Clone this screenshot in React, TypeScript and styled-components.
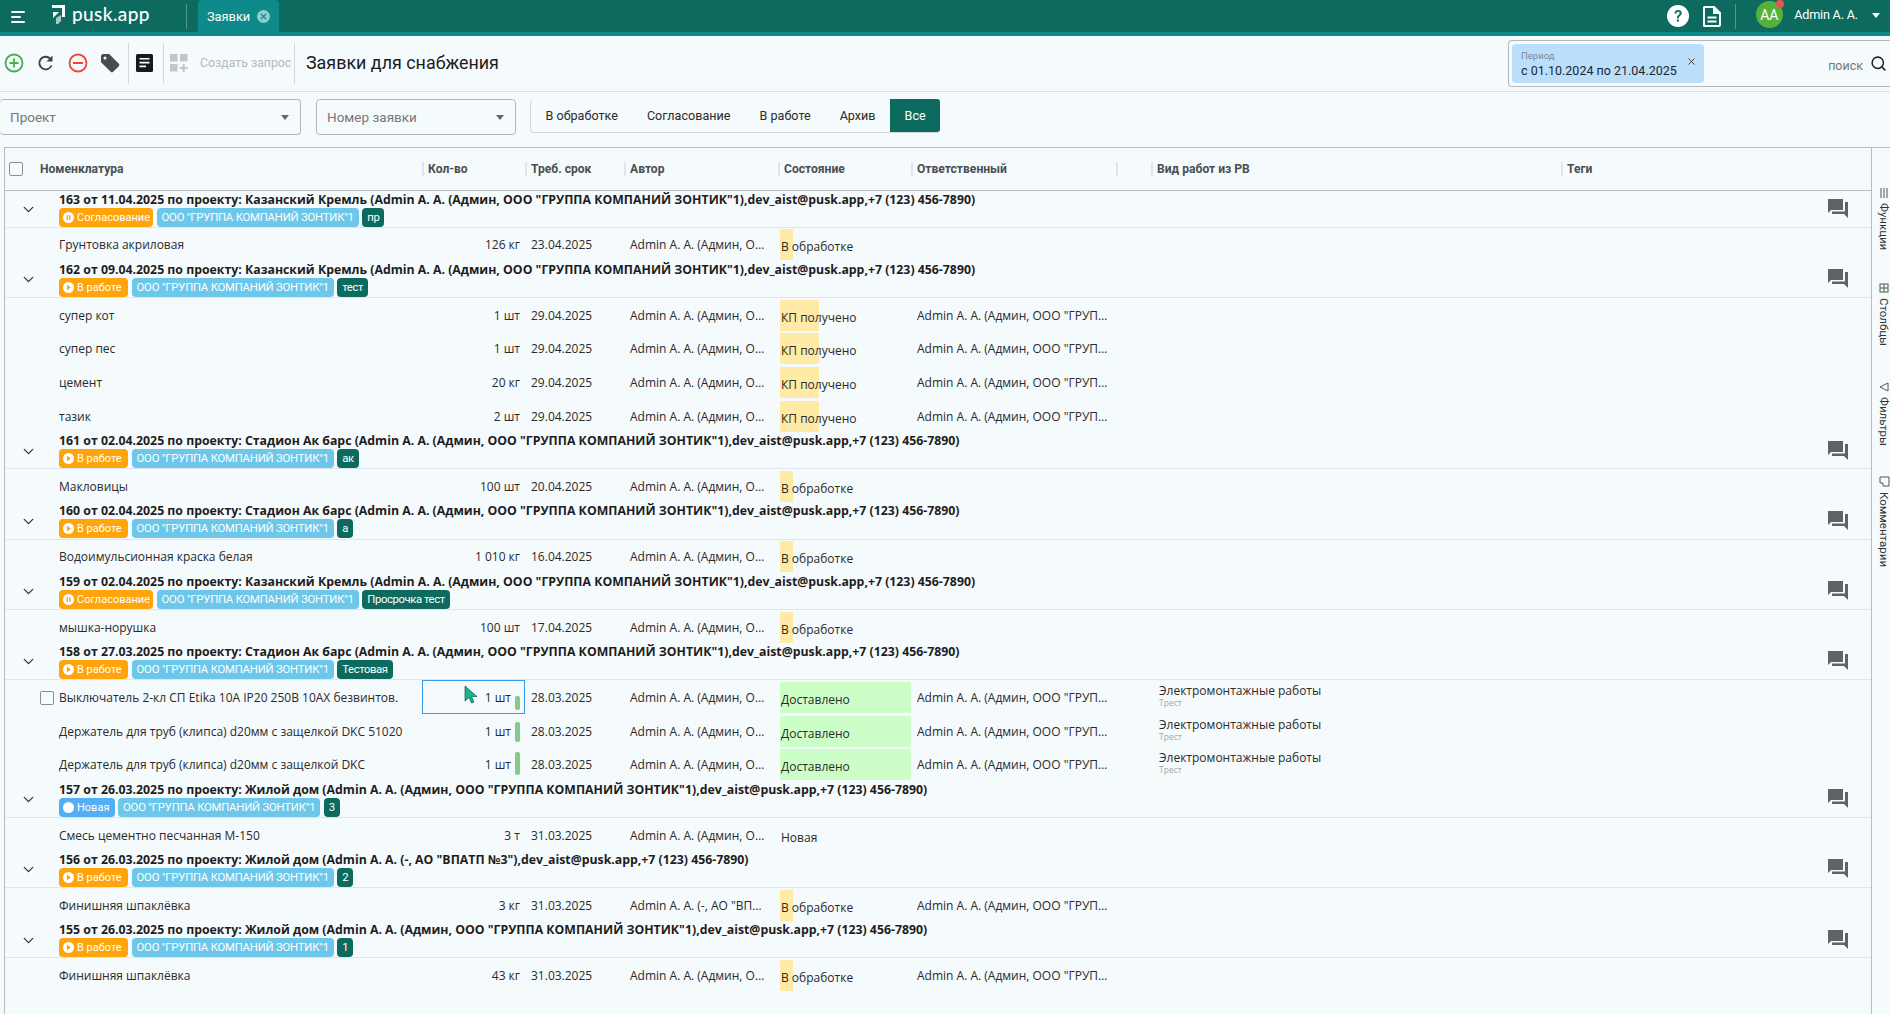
import React from 'react'
import styled, { createGlobalStyle } from 'styled-components'
import { ChevronDown, Search, X } from 'lucide-react'

const GlobalStyle = createGlobalStyle`
  html, body {
    margin: 0;
    height: 100%;
    overflow: hidden;
    background: #f5fafd;
    font-family: Roboto, 'Liberation Sans', sans-serif;
    color: #212121;
  }
  * { box-sizing: border-box; }
`

const COLS = '417px 103px 99px 154px 133px 205px 35px 410px 309px'
const TEAL = '#0c6b5e'
const DATA_FONT = `'Open Sans', 'Noto Sans', sans-serif`

const Page = styled.div`
  height: 1014px;
  display: flex;
  flex-direction: column;
  overflow: hidden;
`
const TopBar = styled.header`
  height: 36px;
  flex: none;
  display: flex;
  align-items: flex-start;
  background: ${TEAL};
  border-bottom: 4px solid #0e8a8a;
`
const Burger = styled.div`
  width: 14px;
  margin: 11px 0 0 11px;
  display: flex;
  flex-direction: column;
  gap: 3px;
  span {
    height: 2px;
    background: #fff;
    border-radius: 1px;
  }
  span:nth-child(1) { width: 14px; }
  span:nth-child(2) { width: 10px; }
  span:nth-child(3) { width: 14px; }
`
const Logo = styled.div`
  width: 99px;
  margin: 2px 0 0 26px;
  display: flex;
  align-items: center;
  gap: 6px;
  color: #fff;
  font: 500 19px/24px Lato, Roboto, sans-serif;
  letter-spacing: 0.4px;
`
const TopDivider = styled.div`
  width: 1px;
  height: 25px;
  margin: 4px 11px 0 36px;
  background: rgba(255, 255, 255, 0.3);
`
const UserDivider = styled(TopDivider)`
  margin: 0;
`
const Tab = styled.div`
  width: 81px;
  height: 32px;
  padding-left: 9px;
  display: flex;
  align-items: center;
  gap: 7px;
  background: #0e8a8a;
  border-radius: 4px 4px 0 0;
  color: #fff;
  font-size: 12.8px;
`
const TabClose = styled.span`
  width: 13px;
  height: 13px;
  border-radius: 50%;
  background: #8fcfcb;
  color: #0e8a8a;
  display: flex;
  align-items: center;
  justify-content: center;
`
const TopRight = styled.div`
  margin-left: auto;
  height: 32px;
  display: flex;
  align-items: center;
`
const TopIcon = styled.span`
  display: flex;
  margin-right: 14px;
`
const Avatar = styled.div`
  position: relative;
  width: 27px;
  height: 27px;
  margin: -3px 11.5px 0 20px;
  border-radius: 50%;
  background: #56b13b;
  color: #fff;
  font-size: 14px;
  display: flex;
  align-items: center;
  justify-content: center;
  &::after {
    content: '';
    position: absolute;
    top: -1px;
    right: -1px;
    width: 8px;
    height: 8px;
    border-radius: 50%;
    background: #ef5350;
  }
`
const UserName = styled.span`
  margin-top: -3px;
  color: #fff;
  font-size: 12.6px;
  letter-spacing: -0.2px;
`
const Caret = styled.span<{ $color?: string }>`
  width: 0;
  height: 0;
  border-left: 4.5px solid transparent;
  border-right: 4.5px solid transparent;
  border-top: 5px solid ${({ $color }) => $color || '#fff'};
`
const UserCaret = styled(Caret)`
  margin: -2px 9.7px 0 14.5px;
`

const Toolbar = styled.div`
  height: 56px;
  flex: none;
  display: flex;
  align-items: center;
  border-bottom: 1px solid #dcdfe1;
`
const ToolIcon = styled.span<{ $w: number; $pr?: number }>`
  width: ${({ $w }) => $w}px;
  padding-right: ${({ $pr }) => $pr ?? 0}px;
  margin-top: -2px;
  display: flex;
  justify-content: center;
`
const ToolDivider = styled.div`
  width: 1px;
  height: 41px;
  margin-top: -1px;
  background: #d4d7d9;
`
const CreateText = styled.span`
  width: 100px;
  margin-top: -2px;
  padding-left: 6px;
  color: #b5b9b8;
  font-size: 12.3px;
  white-space: nowrap;
`
const Title = styled.h1`
  margin: -3px 0 0 11px;
  font-weight: 400;
  font-size: 17.9px;
  color: #1c1c1c;
`
const SearchBox = styled.div`
  margin-left: auto;
  width: 382px;
  height: 47px;
  padding: 3px 3px 3px 3px;
  display: flex;
  align-items: center;
  border: 1px solid #b3b7b9;
  border-right: none;
  border-radius: 4px 0 0 4px;
`
const PeriodChip = styled.div`
  position: relative;
  width: 192px;
  height: 39px;
  padding: 6px 0 0 9px;
  background: #bbdefb;
  border-radius: 4px;
`
const PeriodLabel = styled.div`
  color: #7c8a96;
  font-size: 9.5px;
  line-height: 11px;
`
const PeriodValue = styled.div`
  margin-top: 1px;
  font-size: 12.5px;
  line-height: 17px;
  white-space: nowrap;
  color: #1c2730;
`
const PeriodClose = styled.span`
  position: absolute;
  top: 12px;
  right: 7px;
  display: flex;
`
const SearchText = styled.span`
  margin: 3px 7px 0 auto;
  color: #777;
  font-size: 12.5px;
`

const Filters = styled.div`
  height: 36px;
  margin-top: 7px;
  flex: none;
  display: flex;
`
const Select = styled.div<{ $w: number }>`
  width: ${({ $w }) => $w}px;
  margin-right: 15px;
  padding: 0 11px 0 10px;
  display: flex;
  align-items: center;
  justify-content: space-between;
  border: 1px solid #b3b7b9;
  border-left-width: ${({ $w }) => ($w > 250 ? 0 : 1)}px;
  border-radius: 4px;
  color: #777;
  font-size: 13.5px;
`
const FilterGroup = styled.div`
  height: 34px;
  margin-left: -1px;
  display: flex;
  border-left: 1px solid #d4d7d9;
  border-bottom: 1px solid #d4d7d9;
  border-radius: 4px;
`
const FilterButton = styled.button<{ $active?: boolean }>`
  height: 33px;
  padding: 0 14.5px;
  border: none;
  border-radius: ${({ $active }) => ($active ? '0 3px 3px 0' : '0')};
  background: ${({ $active }) => ($active ? TEAL : 'transparent')};
  color: ${({ $active }) => ($active ? '#fff' : '#2b2b2b')};
  font: 400 12.6px Roboto, sans-serif;
`

const Table = styled.section`
  flex: 1;
  min-height: 0;
  margin: 12px 0 0 4px;
  display: flex;
  border-top: 1px solid #b8bcbe;
  border-left: 1px solid #b8bcbe;
  overflow: hidden;
`
const TableMain = styled.div`
  width: 1867px;
  flex: none;
  border-right: 1px solid #b8bcbe;
`
const HeaderRow = styled.div`
  height: 43px;
  display: grid;
  grid-template-columns: ${COLS};
  align-items: center;
  border-bottom: 1px solid #b8bcbe;
  font: 700 12.1px Roboto, sans-serif;
  color: #4a4f52;
`
const HeaderCell = styled.div`
  height: 14px;
  padding-left: 4px;
  display: flex;
  align-items: center;
  border-left: 2px solid #e1e6ee;
  white-space: nowrap;
`
const HeaderNameCell = styled.div`
  display: flex;
  align-items: center;
  padding-left: 4px;
  gap: 17px;
`
const Check = styled.span`
  width: 14px;
  height: 14px;
  border: 1.5px solid #8c8f91;
  border-radius: 2px;
  flex: none;
`
const RowCheck = styled(Check)`
  position: absolute;
  left: 35px;
  top: 11px;
`

const GroupHead = styled.div`
  height: 36.6px;
  padding: 0.5px 0 0 54px;
  position: relative;
  border-bottom: 1px solid #dfe4ee;
`
const GroupChevron = styled.span`
  position: absolute;
  left: 15px;
  top: 10px;
  display: flex;
  color: #333;
`
const GroupChat = styled.span`
  position: absolute;
  right: 23px;
  top: 8px;
  display: flex;
`
const GroupTitle = styled.div`
  width: fit-content;
  font: 700 12.3px/15px ${DATA_FONT};
  color: #1d1d1d;
  white-space: nowrap;
`
const ChipRow = styled.div`
  margin-top: 1px;
  display: flex;
  gap: 3.5px;
`
const Chip = styled.span<{ $bg: string }>`
  height: 19px;
  padding: 0 4px;
  display: inline-flex;
  align-items: center;
  gap: 3px;
  border-radius: 4px;
  background: ${({ $bg }) => $bg};
  color: #fff;
  font: 400 11px Roboto, sans-serif;
  white-space: nowrap;
`
const StatusChip = styled(Chip)<{ $w: number }>`
  width: ${({ $w }) => $w}px;
`
const CompanyChip = styled(Chip)`
  font-size: 11.3px;
  letter-spacing: -0.2px;
  padding: 0 5px;
`
const TagChip = styled(Chip)`
  font-size: 11.3px;
  letter-spacing: -0.4px;
  padding: 0 5px;
`
const StatusDot = styled.span`
  width: 11px;
  height: 11px;
  border-radius: 50%;
  background: #fff;
  flex: none;
  display: flex;
`

const ItemRow = styled.div`
  height: 33.7px;
  display: grid;
  grid-template-columns: ${COLS};
  align-items: center;
  position: relative;
  font: 400 12px ${DATA_FONT};
  color: #2a2a2a;
`
const NameCell = styled.div`
  padding: 1px 0 0 54px;
  white-space: nowrap;
`
const QtyCell = styled.div<{ $selected?: boolean; $bar?: boolean }>`
  position: relative;
  height: 100%;
  padding: 1px ${({ $bar }) => ($bar ? 13 : 4)}px 0 0;
  display: flex;
  align-items: center;
  justify-content: flex-end;
  border: 1px solid ${({ $selected }) => ($selected ? '#3a9ce8' : 'transparent')};
  white-space: nowrap;
`
const QtyBar = styled.span<{ $top: number; $h: number }>`
  position: absolute;
  right: 4px;
  top: ${({ $top }) => $top}px;
  width: 5px;
  height: ${({ $h }) => $h}px;
  border-radius: 2px;
  background: #86c98a;
`
const Cursor = styled.svg`
  position: absolute;
  left: 41px;
  top: 4px;
`
const DateCell = styled.div`
  padding: 1px 0 0 6px;
`
const EllipsisCell = styled.div`
  padding: 1px 0 0 6px;
  overflow: hidden;
  white-space: nowrap;
  text-overflow: ellipsis;
`
const AuthorCell = styled(EllipsisCell)`
  padding-right: 11px;
`
const RespCell = styled(EllipsisCell)`
  padding-right: 7px;
`
const StateCell = styled.div`
  position: relative;
  height: 31px;
  margin: 1px 0 0 2px;
`
const StateFill = styled.span<{ $bg: string }>`
  position: absolute;
  left: 0;
  top: 0;
  bottom: 0;
  background: ${({ $bg }) => $bg};
`
const StateText = styled.span`
  position: absolute;
  left: 1px;
  top: 9px;
  white-space: nowrap;
`
const WorkCell = styled.div`
  grid-column: 8;
  padding-left: 8px;
  line-height: 14px;
  margin-top: -2px;
`
const WorkSub = styled.div`
  font-size: 8.5px;
  line-height: 10px;
  color: #a3a7a8;
`

const Rail = styled.aside`
  width: 18px;
  flex: none;
  padding: 40px 0 0 6px;
  display: flex;
  flex-direction: column;
  align-items: center;
`
const RailItem = styled.div<{ $mb: number }>`
  margin-bottom: ${({ $mb }) => $mb}px;
  writing-mode: vertical-rl;
  display: flex;
  align-items: center;
  gap: 5px;
  font-size: 11.5px;
  color: #333;
  white-space: nowrap;
`

type State = { text: string; bg?: string; pct: number }
type Item = {
  name: string
  qty: string
  date: string
  state: State
  author?: string
  resp?: boolean
  work?: boolean
  bar?: [number, number]
  selected?: boolean
}
type Group = {
  title: string
  status: 'agree' | 'work' | 'new'
  tag: string
  items: Item[]
}

const PERSON = 'Admin A. A. (Админ, ООО "ГРУППА КОМПАНИЙ ЗОНТИК"1)'
const CONTACT = 'dev_aist@pusk.app,+7 (123) 456-7890)'
const head = (num: string, date: string, project: string, person = PERSON) =>
  `${num} от ${date} по проекту: ${project} (${person},${CONTACT}`

const inWork: State = { text: 'В обработке', bg: '#ffeaa6', pct: 10 }
const quote: State = { text: 'КП получено', bg: '#ffeaa6', pct: 30 }
const done: State = { text: 'Доставлено', bg: '#ccffc8', pct: 100 }

const groups: Group[] = [
  {
    title: head('163', '11.04.2025', 'Казанский Кремль'),
    status: 'agree',
    tag: 'пр',
    items: [{ name: 'Грунтовка акриловая', qty: '126 кг', date: '23.04.2025', state: inWork }],
  },
  {
    title: head('162', '09.04.2025', 'Казанский Кремль'),
    status: 'work',
    tag: 'тест',
    items: [
      { name: 'супер кот', qty: '1 шт', date: '29.04.2025', state: quote, resp: true },
      { name: 'супер пес', qty: '1 шт', date: '29.04.2025', state: quote, resp: true },
      { name: 'цемент', qty: '20 кг', date: '29.04.2025', state: quote, resp: true },
      { name: 'тазик', qty: '2 шт', date: '29.04.2025', state: quote, resp: true },
    ],
  },
  {
    title: head('161', '02.04.2025', 'Стадион Ак барс'),
    status: 'work',
    tag: 'ак',
    items: [{ name: 'Макловицы', qty: '100 шт', date: '20.04.2025', state: inWork }],
  },
  {
    title: head('160', '02.04.2025', 'Стадион Ак барс'),
    status: 'work',
    tag: 'а',
    items: [{ name: 'Водоимульсионная краска белая', qty: '1 010 кг', date: '16.04.2025', state: inWork }],
  },
  {
    title: head('159', '02.04.2025', 'Казанский Кремль'),
    status: 'agree',
    tag: 'Просрочка тест',
    items: [{ name: 'мышка-норушка', qty: '100 шт', date: '17.04.2025', state: inWork }],
  },
  {
    title: head('158', '27.03.2025', 'Стадион Ак барс'),
    status: 'work',
    tag: 'Тестовая',
    items: [
      {
        name: 'Выключатель 2-кл СП Etika 10А IP20 250В 10АХ безвинтов.',
        qty: '1 шт',
        date: '28.03.2025',
        state: done,
        resp: true,
        work: true,
        bar: [15, 14],
        selected: true,
      },
      {
        name: 'Держатель для труб (клипса) d20мм с защелкой DKC 51020',
        qty: '1 шт',
        date: '28.03.2025',
        state: done,
        resp: true,
        work: true,
        bar: [7, 20],
      },
      {
        name: 'Держатель для труб (клипса) d20мм с защелкой DKC',
        qty: '1 шт',
        date: '28.03.2025',
        state: done,
        resp: true,
        work: true,
        bar: [4, 23],
      },
    ],
  },
  {
    title: head('157', '26.03.2025', 'Жилой дом'),
    status: 'new',
    tag: '3',
    items: [{ name: 'Смесь цементно песчанная М-150', qty: '3 т', date: '31.03.2025', state: { text: 'Новая', pct: 0 } }],
  },
  {
    title: head('156', '26.03.2025', 'Жилой дом', 'Admin A. A. (-, АО "ВПАТП №3")'),
    status: 'work',
    tag: '2',
    items: [
      {
        name: 'Финишняя шпаклёвка',
        qty: '3 кг',
        date: '31.03.2025',
        state: inWork,
        author: 'Admin A. A. (-, АО "ВПАТП №3")',
        resp: true,
      },
    ],
  },
  {
    title: head('155', '26.03.2025', 'Жилой дом'),
    status: 'work',
    tag: '1',
    items: [{ name: 'Финишняя шпаклёвка', qty: '43 кг', date: '31.03.2025', state: inWork, resp: true }],
  },
]

const statusInfo = {
  agree: { label: 'Согласование', bg: '#ffa40a', mark: 'pause', width: 94 },
  work: { label: 'В работе', bg: '#ffa40a', mark: 'play', width: 69 },
  new: { label: 'Новая', bg: '#52aef5', mark: '', width: 55.5 },
}

const LogoMark = () => (
  <svg width="15" height="20" viewBox="0 0 15 20">
    <path d="M1 1h13v12h-3V4H1z" fill="#fff" />
    <path d="M2 8h6l-6 6z" fill="#fff" />
    <path d="M5 14l5-3v6l-3 3H5z" fill="#a9c9c3" />
  </svg>
)

const PlusIcon = () => (
  <svg width="20" height="20" viewBox="0 0 20 20" fill="none">
    <circle cx="10" cy="10" r="8.500" stroke="#47b04b" strokeWidth="1.800" />
    <path d="M10 5.500v9M5.500 10h9" stroke="#47b04b" strokeWidth="1.800" />
  </svg>
)
const RefreshIcon = () => (
  <svg width="18" height="18" viewBox="0 0 18 18" fill="none">
    <path d="M14.500 11.500A6.300 6.300 0 1 1 13.200 4.700" stroke="#3d4246" strokeWidth="1.900" />
    <path d="M15.500 1.500v6h-6z" fill="#3d4246" />
  </svg>
)
const MinusIcon = () => (
  <svg width="20" height="20" viewBox="0 0 20 20" fill="none">
    <circle cx="10" cy="10" r="8.500" stroke="#f44336" strokeWidth="1.800" />
    <path d="M5 10h10" stroke="#f44336" strokeWidth="2" />
  </svg>
)
const TagIcon = () => (
  <svg width="20" height="20" viewBox="0 0 20 20">
    <path d="M1 3.200C1 2 2 1 3.200 1h6l9.600 9.700c.7.700.7 1.800 0 2.500l-5.600 5.600c-.7.700-1.800.7-2.500 0L1 9.200z" fill="#474c50" />
    <circle cx="5" cy="5" r="1.500" fill="#f5fafd" />
  </svg>
)
const NoteIcon = () => (
  <svg width="17" height="18" viewBox="0 0 17 18">
    <rect width="17" height="18" rx="1.500" fill="#17191b" />
    <path d="M3.500 4h10v1.600h-10zM3.500 7.800h10v1.600h-10zM3.500 11.600h6.500v1.600H3.500z" fill="#fff" />
  </svg>
)
const GridPlusIcon = () => (
  <svg width="18" height="18" viewBox="0 0 18 18" fill="#c3c6c6">
    <rect x="0" y="0" width="7.500" height="7.500" />
    <rect x="10" y="0" width="7.500" height="7.500" />
    <rect x="0" y="10" width="7.500" height="7.500" />
    <path d="M12.700 10h2v3h3v2h-3v3h-2v-3h-3v-2h3z" />
  </svg>
)
const HelpIcon = () => (
  <svg width="22" height="22" viewBox="0 0 22 22">
    <circle cx="11" cy="11" r="11" fill="#fff" />
    <path
      d="M7.500 8.500C7.500 6.300 9 5 11.100 5c2.100 0 3.600 1.300 3.600 3.100 0 1.400-.8 2.100-1.700 2.800-.9.700-1.200 1.100-1.200 2.300H9.900c0-1.700.5-2.400 1.500-3.200.8-.6 1.200-1.100 1.200-1.800 0-.8-.6-1.400-1.500-1.400-1 0-1.600.7-1.600 1.700z"
      fill={TEAL}
    />
    <rect x="9.900" y="14.400" width="2" height="2.200" fill={TEAL} />
  </svg>
)
const DocIcon = () => (
  <svg width="18" height="21" viewBox="0 0 18 21">
    <path
      d="M1.500 0h10L18 6.500V19a2 2 0 0 1-2 2H1.500A1.500 1.500 0 0 1 0 19.500v-18A1.500 1.500 0 0 1 1.500 0zM2 2v17h14V8h-6V2z"
      fill="#fff"
      fillRule="evenodd"
    />
    <path d="M4.500 10.500h9v2h-9zM4.500 14.500h9v2h-9z" fill="#fff" />
  </svg>
)
const ChatIcon = () => (
  <svg width="20" height="19" viewBox="0 0 20 19" fill="#5f6368">
    <path d="M0 0h15v11H3l-3 3z" />
    <path d="M17 3h3v16l-4-4H4v-2.500h13z" />
  </svg>
)

const Status = ({ status }: { status: Group['status'] }) => {
  const { label, bg, mark, width } = statusInfo[status]
  return (
    <StatusChip $bg={bg} $w={width}>
      <StatusDot>
        {mark === 'pause' && (
          <svg width="11" height="11" viewBox="0 0 11 11" fill={bg}>
            <path d="M3.500 3h1.400v5H3.500zM6.100 3h1.400v5H6.100z" />
          </svg>
        )}
        {mark === 'play' && (
          <svg width="11" height="11" viewBox="0 0 11 11" fill={bg}>
            <path d="M4 2.800l4 2.700-4 2.700z" />
          </svg>
        )}
      </StatusDot>
      {label}
    </StatusChip>
  )
}

const Row = ({ item }: { item: Item }) => (
  <ItemRow>
    {item.selected && <RowCheck />}
    <NameCell>{item.name}</NameCell>
    <QtyCell $selected={item.selected} $bar={!!item.bar}>
      {item.selected && (
        <Cursor width="13" height="19" viewBox="0 0 13 19">
          <path d="M1 1v15l4-3.500 2.500 5.500 2.500-1-2.500-5.500H13z" fill="#12b88f" stroke="#0b3d36" strokeWidth="0.600" />
        </Cursor>
      )}
      {item.qty}
      {item.bar && <QtyBar $top={item.bar[0]} $h={item.bar[1]} />}
    </QtyCell>
    <DateCell>{item.date}</DateCell>
    <AuthorCell>{item.author || PERSON}</AuthorCell>
    <StateCell>
      {item.state.bg && <StateFill $bg={item.state.bg} style={{ width: `${item.state.pct}%` }} />}
      <StateText>{item.state.text}</StateText>
    </StateCell>
    {item.resp ? <RespCell>{PERSON}</RespCell> : <div />}
    {item.work && (
      <WorkCell>
        Электромонтажные работы
        <WorkSub>Трест</WorkSub>
      </WorkCell>
    )}
  </ItemRow>
)

const App = () => (
  <Page>
    <GlobalStyle />
    <TopBar>
      <Burger>
        <span />
        <span />
        <span />
      </Burger>
      <Logo>
        <LogoMark />
        pusk.app
      </Logo>
      <TopDivider />
      <Tab>
        Заявки
        <TabClose>
          <X size={9} strokeWidth={3} />
        </TabClose>
      </Tab>
      <TopRight>
        <TopIcon>
          <HelpIcon />
        </TopIcon>
        <TopIcon>
          <DocIcon />
        </TopIcon>
        <UserDivider />
        <Avatar>AA</Avatar>
        <UserName>Admin A. A.</UserName>
        <UserCaret />
      </TopRight>
    </TopBar>

    <Toolbar>
      <ToolIcon $w={28}>
        <PlusIcon />
      </ToolIcon>
      <ToolIcon $w={36}>
        <RefreshIcon />
      </ToolIcon>
      <ToolIcon $w={28}>
        <MinusIcon />
      </ToolIcon>
      <ToolIcon $w={36}>
        <TagIcon />
      </ToolIcon>
      <ToolDivider />
      <ToolIcon $w={34} $pr={4}>
        <NoteIcon />
      </ToolIcon>
      <ToolDivider />
      <ToolIcon $w={30}>
        <GridPlusIcon />
      </ToolIcon>
      <CreateText>Создать запрос</CreateText>
      <ToolDivider />
      <Title>Заявки для снабжения</Title>
      <SearchBox>
        <PeriodChip>
          <PeriodLabel>Период</PeriodLabel>
          <PeriodValue>с 01.10.2024 по 21.04.2025</PeriodValue>
          <PeriodClose>
            <X size={11} strokeWidth={2} color="#333" />
          </PeriodClose>
        </PeriodChip>
        <SearchText>поиск</SearchText>
        <Search size={17} strokeWidth={2.2} color="#222" />
      </SearchBox>
    </Toolbar>

    <Filters>
      <Select $w={301}>
        Проект
        <Caret $color="#666" />
      </Select>
      <Select $w={200}>
        Номер заявки
        <Caret $color="#666" />
      </Select>
      <FilterGroup>
        <FilterButton>В обработке</FilterButton>
        <FilterButton>Согласование</FilterButton>
        <FilterButton>В работе</FilterButton>
        <FilterButton>Архив</FilterButton>
        <FilterButton $active>Все</FilterButton>
      </FilterGroup>
    </Filters>

    <Table>
      <TableMain>
        <HeaderRow>
          <HeaderNameCell>
            <Check />
            Номенклатура
          </HeaderNameCell>
          <HeaderCell>Кол-во</HeaderCell>
          <HeaderCell>Треб. срок</HeaderCell>
          <HeaderCell>Автор</HeaderCell>
          <HeaderCell>Состояние</HeaderCell>
          <HeaderCell>Ответственный</HeaderCell>
          <HeaderCell />
          <HeaderCell>Вид работ из РВ</HeaderCell>
          <HeaderCell>Теги</HeaderCell>
        </HeaderRow>
        {groups.map((group) => (
          <div key={group.title}>
            <GroupHead>
              <GroupChevron>
                <ChevronDown size={17} strokeWidth={1.8} />
              </GroupChevron>
              <GroupTitle>{group.title}</GroupTitle>
              <ChipRow>
                <Status status={group.status} />
                <CompanyChip $bg="#6cc7ea">ООО "ГРУППА КОМПАНИЙ ЗОНТИК"1</CompanyChip>
                <TagChip $bg={TEAL}>{group.tag}</TagChip>
              </ChipRow>
              <GroupChat>
                <ChatIcon />
              </GroupChat>
            </GroupHead>
            {group.items.map((item) => (
              <Row key={item.name} item={item} />
            ))}
          </div>
        ))}
      </TableMain>
      <Rail>
        <RailItem $mb={33}>
          <svg width="10" height="10" viewBox="0 0 10 10" fill="none" stroke="#555">
            <path d="M2 0v10M5 0v10M8 0v10" />
          </svg>
          Функции
        </RailItem>
        <RailItem $mb={36}>
          <svg width="10" height="10" viewBox="0 0 10 10" fill="none" stroke="#555">
            <rect x="1" y="1" width="8" height="8" />
            <path d="M1 5h8M5 1v8" />
          </svg>
          Столбцы
        </RailItem>
        <RailItem $mb={30}>
          <svg width="10" height="10" viewBox="0 0 10 10" fill="none" stroke="#555">
            <path d="M9 1v8L1 5z" />
          </svg>
          Фильтры
        </RailItem>
        <RailItem $mb={0}>
          <svg width="11" height="11" viewBox="0 0 11 11" fill="none" stroke="#555">
            <path d="M10 1v9H4V7H1V1z" />
          </svg>
          Комментарии
        </RailItem>
      </Rail>
    </Table>
  </Page>
)

export default App
